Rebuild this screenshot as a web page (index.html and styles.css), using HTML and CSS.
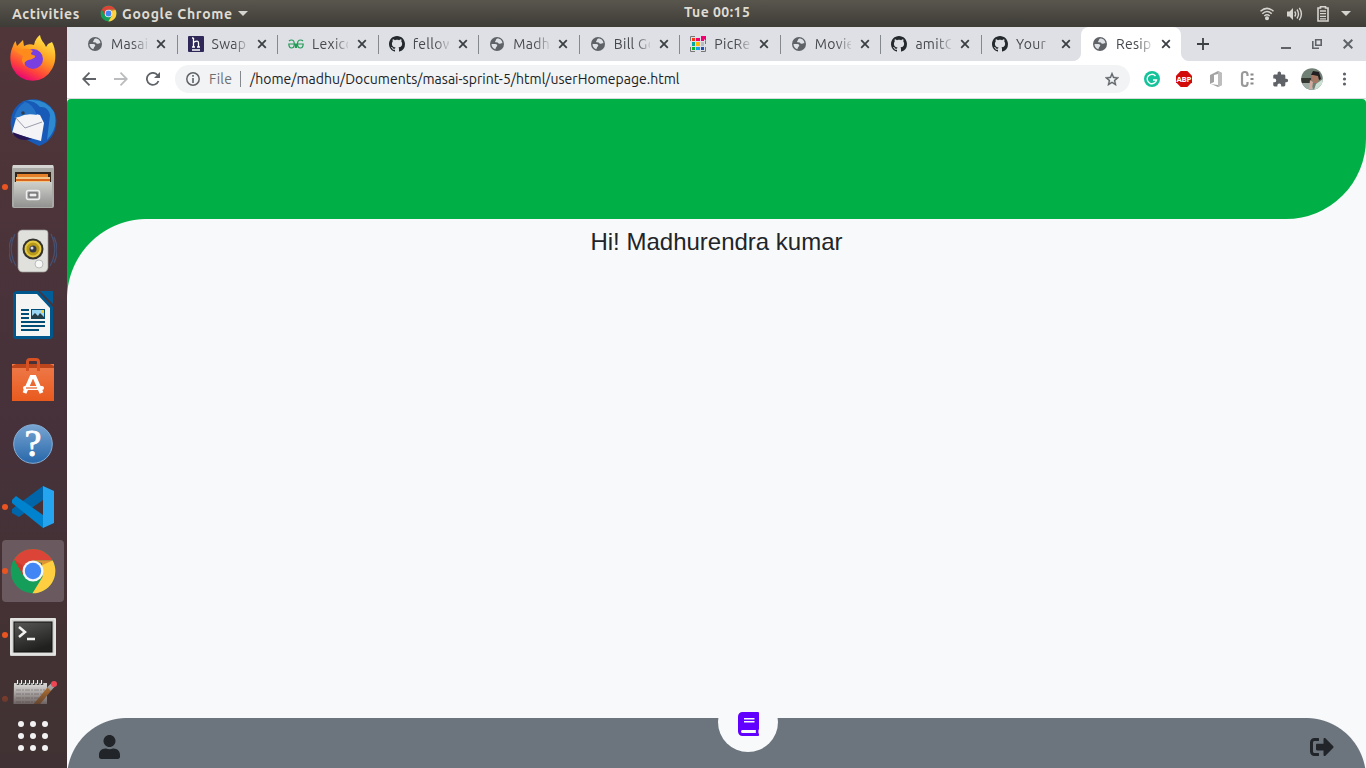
FILE: index.html
```html
<!DOCTYPE html>
<html lang="en">
<head>
<meta charset="utf-8">
<title>Resipe</title>
<link rel="stylesheet" href="styles.css">
</head>
<body>
<svg class="defs" aria-hidden="true">
  <symbol id="globe" viewBox="0 0 14 14"><circle cx="7" cy="7" r="7" fill="#5f6368"/><path d="M7.2 1.5C5.700 2 6.200 3.400 5.200 4.200 4.600 5 5.600 5.700 6.900 5.300 7.700 5 8 6.500 9.500 6.700 10.700 7 10.400 6 12.400 6.300 12.500 3.800 10.400 1.400 7.200 1.500ZM1.500 7H5.300C7 7 7.700 8.400 7 9.200 6 9.600 6.200 10.500 5.300 12.200 3 11.500 1.400 9.400 1.500 7Z" fill="#dee1e6"/></symbol>
  <symbol id="github" viewBox="0 0 16 16"><path fill="#24292e" d="M8 0C3.58 0 0 3.58 0 8c0 3.54 2.29 6.53 5.47 7.59.4.07.55-.17.55-.38 0-.19-.01-.82-.01-1.49-2.01.37-2.53-.49-2.69-.94-.09-.23-.48-.94-.82-1.13-.28-.15-.68-.52-.01-.53.63-.01 1.08.58 1.23.82.72 1.21 1.87.87 2.33.66.07-.52.28-.87.51-1.07-1.78-.2-3.64-.89-3.64-3.95 0-.87.31-1.59.82-2.15-.08-.2-.36-1.02.08-2.12 0 0 .67-.21 2.2.82.64-.18 1.32-.27 2-.27s1.36.09 2 .27c1.53-1.04 2.2-.82 2.2-.82.44 1.1.16 1.92.08 2.12.51.56.82 1.27.82 2.15 0 3.07-1.87 3.75-3.65 3.95.29.25.54.73.54 1.48 0 1.07-.01 1.93-.01 2.2 0 .21.15.46.55.38A8 8 0 0 0 16 8c0-4.42-3.58-8-8-8z"/></symbol>
  <symbol id="close" viewBox="0 0 10 10"><path d="M1.2 1.2 8.8 8.8M8.8 1.2 1.2 8.8" stroke="#3c4043" stroke-width="1.8"/></symbol>
  <symbol id="chrome" viewBox="0 0 48 48"><circle cx="24" cy="24" r="22.3" fill="#149e59"/><path d="M5 12.5A22.3 22.3 0 0 1 43.5 13.5H24L14 28Z" fill="#dc4437"/><path d="M43.7 13.5A22.3 22.3 0 0 1 23.5 46.3L33.5 30 33 16 24 13.5Z" fill="#ffce41"/><path d="M24 13.5H43.7L33.5 18ZM14 28 5 12.5 17 21Z" fill="#a6271b" opacity=".35"/><circle cx="24" cy="24" r="10.5" fill="#f4f7fb"/><circle cx="24" cy="24" r="8.2" fill="#4285f4"/></symbol>
  <linearGradient id="gFire" x1=".8" y1="0" x2=".3" y2="1"><stop offset="0" stop-color="#fff04a"/><stop offset=".45" stop-color="#ff9a20"/><stop offset=".75" stop-color="#ff443b"/><stop offset="1" stop-color="#e7007a"/></linearGradient>
  <linearGradient id="gGrey" x1="0" y1="0" x2="0" y2="1"><stop offset="0" stop-color="#cfcfcc"/><stop offset="1" stop-color="#929290"/></linearGradient>
  <linearGradient id="gHelp" x1="0" y1="0" x2="0" y2="1"><stop offset="0" stop-color="#78a5d2"/><stop offset="1" stop-color="#2767aa"/></linearGradient>
  <linearGradient id="gBag" x1="0" y1="0" x2="0" y2="1"><stop offset="0" stop-color="#ee7b4b"/><stop offset="1" stop-color="#e95a1e"/></linearGradient>
  <linearGradient id="gTerm" x1="0" y1="0" x2=".4" y2="1"><stop offset="0" stop-color="#585856"/><stop offset="1" stop-color="#20201f"/></linearGradient>
</svg>

<header class="topbar">
  <div class="topbar-left"><span class="activities">Activities</span><svg width="17" height="17"><use href="#chrome"/></svg><span class="appname">Google Chrome</span><i class="caret"></i></div>
  <span class="clock">Tue 00:15</span>
  <div class="topbar-right">
    <svg class="wifi" width="14" height="14" viewBox="0 0 14 14" fill="none" stroke="#d6d4cf" stroke-width="1.5"><path d="M.5 4.3Q7-1.6 13.5 4.3M2.3 6.8Q7 2.3 11.7 6.8M4.3 9Q7 6.5 9.7 9"/><circle cx="7" cy="11.3" r="1.3" fill="#d6d4cf"/></svg>
    <svg class="vol" width="16" height="14" viewBox="0 0 16 14"><path d="M0 4.5H2.5L6 1V13L2.500 9.500H0Z" fill="#d6d4cf"/><path d="M7.700 4.500Q9.500 7 7.700 9.500M10 2.500Q13 7 10 11.500M12.300 .8Q16.500 7 12.300 13.200" fill="none" stroke="#d6d4cf" stroke-width="1.400"/></svg>
    <svg class="bat" width="12" height="16" viewBox="0 0 12 16"><path d="M3.500 2V.8H8.500V2H11V15H1V2Z" fill="none" stroke="#d6d4cf" stroke-width="1.600"/><path d="M3 5H9M3 7.700H9M3 10.300H9M3 12.800H9" stroke="#d6d4cf" stroke-width="1.300"/></svg>
    <i class="caret"></i>
  </div>
</header>

<div class="desktop">
  <nav class="dock">
    <div class="app up"><svg width="48" height="48" viewBox="0 0 48 48"><path d="M4 12C5 9 6 8 6.500 7L8 12 14 6 15 12Q20 9 25 11C26 6 28 3 31 1 32 7 35 8 37 13L39 10 43 8C47 15 48 27 43 35A22 22 0 0 1 4 35C0 27 1 18 4 12Z" fill="url(#gFire)"/><circle cx="24" cy="25" r="10" fill="#793fe0"/><path d="M5 15Q8 13 12 16 18 13 24 17 20 20 24 21 28 22 25 24 22 26 19 26 14 28 16 32 11 27 14 22 9 20 5 15Z" fill="#ff8b1d"/></svg></div>
    <div class="app"><svg width="48" height="48" viewBox="0 0 48 48"><path d="M13 3C26-4 44 3 47 18 49 30 43 43 30 47L26 45 12 38 4 35C-1 25 2 9 13 3Z" fill="#185ab7"/><path d="M12 3Q23-1 31 8 39 7 41 16L38 41Q50 28 45 13 37 0 21 1Z" fill="#2d8ad0"/><path d="M8 16Q18 12 31 16L35 24 32 42 3 34Z" fill="#f4f4f6"/><path d="M6 18 16 29 33 23" fill="none" stroke="#9a9dab"/><path d="M5 19Q8 8 16 3 24 5 28 16 17 14 10 18Z" fill="#2674c8"/><circle cx="14" cy="14" r="1.800" fill="#303b4f"/><path d="M3 33 23 40 17 41Q8 42 3 33Z" fill="#281654"/></svg></div>
    <div class="app running"><svg width="48" height="48" viewBox="0 0 48 48"><path d="M3 4Q3 2 5 2H43Q45 2 45 4V43Q45 45 43 45H5Q3 45 3 43Z" fill="#a9a9a6"/><path d="M4 2H44V5H4Z" fill="#d4d4d2"/><path d="M6 9H42V19H6Z" fill="#332519"/><path d="M8 11H39V14H8Z" fill="#e78129"/><path d="M7 14H41V19H7Z" fill="#f0c784"/><path d="M7 16H41V18H7Z" fill="#dc631b"/><path d="M5 19H43V44H5Z" fill="url(#gGrey)"/><rect x="17.500" y="27.500" width="13" height="9" rx="2" fill="#aaa" stroke="#eee" stroke-width="1.500"/><rect x="20" y="30" width="8" height="4" fill="#eee" stroke="#555"/></svg></div>
    <div class="app"><svg width="48" height="48" viewBox="0 0 48 48"><path d="M6 7Q-2 23 7 39M3 10Q-3 23 3 36M42 7Q50 23 41 39M45 10Q51 23 45 36" fill="none" stroke="#465070" stroke-width="1.300"/><path d="M13 3H36Q39 3 39 6V41Q38 45 35 45H13Q10 45 9 41V6Q10 3 13 3Z" fill="#e0e0dd" stroke="#999" stroke-width=".7"/><circle cx="24" cy="22" r="10.500" fill="#34322c"/><circle cx="24" cy="22" r="7.500" fill="#b99a18" stroke="#e4c843" stroke-width="2"/><circle cx="24" cy="22" r="3.500" fill="#353949"/><circle cx="23" cy="21" r="1.500" fill="#ddd"/><circle cx="30" cy="37" r="4" fill="#f7f7f5" stroke="#bbb"/></svg></div>
    <div class="app"><svg width="48" height="48" viewBox="0 0 48 48"><path d="M7 0H29L44 16V46L42 48H6L4 46V2Z" fill="#00578c"/><path d="M7 3H28L41 17V45H7Z" fill="#f5f5f4"/><path d="M31 0H44V13Z" fill="#005d98"/><path d="M12 19H20M12 23H20M12 27H20M12 31H36M12 35H36M12 39H30" stroke="#004d76" stroke-width="2"/><rect x="22.500" y="18.500" width="13" height="9" fill="#9bd5f4" stroke="#004d76"/><path d="M23 27.500 23 25 26 22 29 25 31 22 35 26V27.500Z" fill="#263d43"/><circle cx="33.500" cy="20.500" r="1.500" fill="#fad02e"/></svg></div>
    <div class="app down"><svg width="48" height="48" viewBox="0 0 48 48"><path d="M3 8H45V45H3Z" fill="url(#gBag)"/><path d="M3 12V10L7 8H41L45 10V12Z" fill="#bd451c"/><path d="M18.500 15V6Q18.500 3.500 21 3.500H27Q29.500 3.500 29.500 6V15" fill="none" stroke="#d75122" stroke-width="3"/><path d="M15.500 37 22.500 21H25.500L32.500 37" fill="none" stroke="#fff" stroke-width="4"/><path d="M16 32H33" stroke="#fff" stroke-width="4" stroke-linecap="round"/><path d="M17 32H28" stroke="#e96a35" stroke-width="1.300"/></svg></div>
    <div class="app down"><svg width="48" height="48" viewBox="0 0 48 48"><circle cx="24" cy="24" r="19.300" fill="url(#gHelp)" stroke="#86afd8"/><text class="question" x="24" y="36" text-anchor="middle">?</text></svg></div>
    <div class="app running"><svg width="48" height="48" viewBox="0 0 48 48"><path d="M34 3V17L10 34 3 30V26Z" fill="#0065a9"/><path d="M3 17 7 13 34 32V45L3 20Z" fill="#0083ce"/><path d="M34 3 45 8V40L34 45Z" fill="#25a5f0"/></svg></div>
    <div class="app running active"><svg width="48" height="48"><use href="#chrome"/></svg></div>
    <div class="app running down2"><svg width="48" height="48" viewBox="0 0 48 48"><rect x="1" y="5" width="46" height="38" rx="1" fill="#d2d2d0"/><rect x="2" y="6" width="44" height="35" fill="none" stroke="#f2f2f1"/><rect x="5" y="9" width="38" height="30" fill="url(#gTerm)" stroke="#111"/><path d="M10 14 16 19 10 24M18 26H26" fill="none" stroke="#f1f1ef" stroke-width="2.500"/></svg></div>
    <div class="app running notes"><svg width="48" height="48" viewBox="0 0 48 48"><path d="M5 5H38V44H4Z" fill="#d1d0ce"/><path d="M7 12H36M7 16H36M7 20H30M7 24H32" stroke="#999" stroke-width="1" stroke-dasharray="5 1 2 1"/><path d="M9 2V7M13 2V7M17 2V7M21 2V7M25 2V7M29 2V7M33 2V7" stroke="#444" stroke-width="2.500"/><path d="M8.500 2V6M12.500 2V6M16.500 2V6M20.500 2V6M24.500 2V6M28.500 2V6M32.500 2V6" stroke="#eee"/><path d="M23 32 42 9" stroke="#b8742e" stroke-width="5"/><path d="M40 11 44 7" stroke="#aaa" stroke-width="5"/><circle cx="45" cy="6" r="3" fill="#ef4654"/></svg></div>
    <div class="allapps"><i></i><i></i><i></i><i></i><i></i><i></i><i></i><i></i><i></i></div>
  </nav>

  <main class="browser">
    <div class="tabs">
      <div class="tab"><svg class="favicon"><use href="#globe"/></svg><span>Masai</span><svg class="x"><use href="#close"/></svg></div>
      <div class="tab"><svg class="favicon big" viewBox="0 0 16 16"><rect width="16" height="16" rx="1" fill="#2e2757"/><path d="M5.500 2V11M5.500 6.500Q10.500 3.500 10.500 7V11M4 2H5.500M4 11H7M9 11H12M4 14H12" fill="none" stroke="#fff" stroke-width="1.300"/></svg><span>Swap</span><svg class="x"><use href="#close"/></svg></div>
      <div class="tab"><svg class="favicon big" viewBox="0 0 16 16"><path d="M1 5Q2 4 3.500 4 6.300 4 6.300 8 6.300 12 3.500 12 1 12 .8 8H7.500V12M15 5Q14 4 12.500 4 9.500 4 9.500 8 9.500 12 12.500 12 15 12 15.200 8H8.500V12" fill="none" stroke="#239b56" stroke-width="1.200"/></svg><span>Lexico</span><svg class="x"><use href="#close"/></svg></div>
      <div class="tab"><svg class="favicon big"><use href="#github"/></svg><span>fellow</span><svg class="x"><use href="#close"/></svg></div>
      <div class="tab"><svg class="favicon"><use href="#globe"/></svg><span>Madh</span><svg class="x"><use href="#close"/></svg></div>
      <div class="tab"><svg class="favicon"><use href="#globe"/></svg><span>Bill Go</span><svg class="x"><use href="#close"/></svg></div>
      <div class="tab"><svg class="favicon big" viewBox="0 0 16 16"><path d="M.5 5V.5H5M11 15.500H15.500V11M.5 11V15.500H5M15.500 5V8" fill="none" stroke="#777"/><path d="M2 2H5V5H2Z" fill="#f33b12"/><path d="M6 2H10V5H6ZM11 0H16V5L14 3V5H11Z" fill="#f30070"/><path d="M2 6H5V10H2Z" fill="#05a99d"/><path d="M6 6H10V10H6Z" fill="#ffb900"/><path d="M11 6H14V10H11Z" fill="#bbb"/><path d="M2 11H5V14H2Z" fill="#08b925"/><path d="M6 11H10V14H6Z" fill="#18a1e7"/><path d="M11 11H14V14H11Z" fill="#234eac"/></svg><span>PicRe</span><svg class="x"><use href="#close"/></svg></div>
      <div class="tab"><svg class="favicon"><use href="#globe"/></svg><span>Movie</span><svg class="x"><use href="#close"/></svg></div>
      <div class="tab"><svg class="favicon big"><use href="#github"/></svg><span>amitG</span><svg class="x"><use href="#close"/></svg></div>
      <div class="tab before-current"><svg class="favicon big"><use href="#github"/></svg><span>Your</span><svg class="x"><use href="#close"/></svg></div>
      <div class="tab current"><svg class="favicon"><use href="#globe"/></svg><span>Resip</span><svg class="x"><use href="#close"/></svg></div>
      <svg class="newtab" width="12" height="12" viewBox="0 0 12 12"><path d="M6 0V12M0 6H12" stroke="#3c4043" stroke-width="1.800"/></svg>
      <div class="winbuttons"><svg width="10" height="12" viewBox="0 0 10 12"><path d="M0 10H10" stroke="#5f6368" stroke-width="2"/></svg><svg width="10" height="10" viewBox="0 0 10 10"><path d="M3.700.8H9.200V6.200H3.700ZM.8 2V9.200H7" fill="none" stroke="#5f6368" stroke-width="1.600"/></svg><svg width="10" height="10" viewBox="0 0 10 10"><path d="M.7.7 9.300 9.300M9.300.7.7 9.300" stroke="#5f6368" stroke-width="2"/></svg></div>
    </div>

    <div class="toolbar">
      <div class="navicons">
        <svg viewBox="0 0 14 14"><path d="M14 7H1.500M7.500 .7 1.200 7 7.500 13.300" fill="none" stroke="#5f6368" stroke-width="1.800"/></svg>
        <svg viewBox="0 0 14 14"><path d="M0 7H12.500M6.500 .7 12.800 7 6.500 13.300" fill="none" stroke="#babcbe" stroke-width="1.800"/></svg>
        <svg viewBox="0 0 14 14"><path d="M12.500 9A6 6 0 1 1 11.500 3" fill="none" stroke="#5f6368" stroke-width="1.800"/><path d="M14 0V6H8Z" fill="#5f6368"/></svg>
      </div>
      <div class="omnibox">
        <svg width="14" height="14" viewBox="0 0 14 14"><circle cx="7" cy="7" r="6.200" fill="none" stroke="#5f6368" stroke-width="1.500"/><path d="M7 3V4.800M7 6V11" stroke="#5f6368" stroke-width="1.600"/></svg>
        <span class="file">File</span><span class="url">/home/madhu/Documents/masai-sprint-5/html/userHomepage.html</span>
        <svg class="star" width="14" height="14" viewBox="2 2 20 19"><path fill="#5f6368" stroke="#5f6368" stroke-width=".5" d="M22 9.240l-7.190-.62L12 2 9.190 8.630 2 9.240l5.460 4.730L5.820 21 12 17.270 18.180 21l-1.630-7.030L22 9.240zM12 15.400l-3.760 2.270 1-4.280-3.320-2.880 4.380-.38L12 6.100l1.710 4.040 4.380.38-3.320 2.880 1 4.280L12 15.400z"/></svg>
      </div>
      <div class="extensions">
        <svg viewBox="0 0 22 22"><circle cx="11" cy="11" r="8" fill="#15c39a"/><path d="M14.500 8A4.700 4.700 0 1 0 15.500 12H12M15.500 12 14 14.500" fill="none" stroke="#fff" stroke-width="1.400"/></svg>
        <svg viewBox="0 0 22 22"><path d="M7.700 3H14.300L19 7.700V14.300L14.300 19H7.700L3 14.300V7.700Z" fill="#d20b0b"/><text class="abp" x="11" y="13.800" text-anchor="middle" textLength="15">ABP</text></svg>
        <svg viewBox="0 0 22 22"><path d="M13 3 17 5V17L13 19 6 16 13 17V6L9 7V14L5 16V7Z" fill="#a3a3a3"/><path d="M13 3 17 5V17L13 19Z" fill="#bdbdbd"/></svg>
        <svg viewBox="0 0 22 22"><path d="M10.500 8V6.500Q10.500 4 7.800 4T5 6.500V15.500Q5 18 7.800 18T10.500 15.500V14" fill="none" stroke="#999" stroke-width="2.200"/><path d="M13.500 5.500H16.500V7.500H13.500ZM13.500 10H16.500V12H13.500ZM13.500 14.500H16.500V16.500H13.500Z" fill="#888"/></svg>
        <svg viewBox="-4 -4 31 31"><path fill="#5f6368" d="M20.500 11H19V7c0-1.100-.9-2-2-2h-4V3.500a2.500 2.500 0 0 0-5 0V5H4c-1.100 0-2 .9-2 2v3.800h1.500a2.700 2.700 0 0 1 0 5.400H2V20c0 1.100.9 2 2 2h3.800v-1.500a2.700 2.700 0 0 1 5.400 0V22H17c1.100 0 2-.9 2-2v-4h1.500a2.500 2.500 0 0 0 0-5z"/></svg>
        <svg viewBox="0 0 22 22"><clipPath id="face"><circle cx="11" cy="11" r="10.800"/></clipPath><g clip-path="url(#face)"><path d="M0 0H22V22H0Z" fill="#718074"/><path d="M0 10H10V16H0Z" fill="#343830"/><path d="M0 15H9L13 22H0Z" fill="#a1aca6"/><path d="M10 6 16 5 18 9 17 15 12 15Z" fill="#a67864"/><path d="M10 7 12 3 18 4 20 11 18 12 17 8 12 7Z" fill="#201e20"/><path d="M15 16 22 11V22H13Z" fill="#cce0d5"/><path d="M9 12 12 14 11 21H8Z" fill="#d2aaa0"/></g></svg>
        <svg viewBox="0 0 22 22" fill="#5f6368"><circle cx="11.500" cy="6" r="1.600"/><circle cx="11.500" cy="11" r="1.600"/><circle cx="11.500" cy="16" r="1.600"/></svg>
      </div>
    </div>

    <section class="page">
      <div class="banner"></div>
      <div class="content"><h1>Hi! Madhurendra kumar</h1></div>
      <footer class="footer">
        <svg width="21" height="24" viewBox="0 0 448 512"><path d="M224 256c70.700 0 128-57.300 128-128S294.700 0 224 0 96 57.300 96 128s57.300 128 128 128zm89.600 32h-16.700c-22.200 10.200-46.900 16-72.900 16s-50.600-5.800-72.900-16h-16.700C60.200 288 0 348.200 0 422.400V464c0 26.500 21.500 48 48 48h352c26.500 0 48-21.500 48-48v-41.600c0-74.200-60.200-134.400-134.400-134.400z"/></svg>
        <svg width="24" height="24" viewBox="0 0 512 512"><path d="M497 273L329 441c-15 15-41 4.500-41-17v-96H152c-13.300 0-24-10.700-24-24v-96c0-13.300 10.700-24 24-24h136V88c0-21.400 25.900-32 41-17l168 168c9.300 9.400 9.300 24.600 0 34zM192 436v-40c0-6.600-5.400-12-12-12H96c-17.700 0-32-14.300-32-32V160c0-17.700 14.300-32 32-32h84c6.600 0 12-5.400 12-12V76c0-6.600-5.400-12-12-12H96c-53 0-96 43-96 96v192c0 53 43 96 96 96h84c6.600 0 12-5.400 12-12z"/></svg>
        <div class="bookmark"><svg width="21" height="24" viewBox="0 0 448 512"><path d="M448 360V24c0-13.300-10.700-24-24-24H96C43 0 0 43 0 96v320c0 53 43 96 96 96h328c13.300 0 24-10.700 24-24v-16c0-7.500-3.500-14.300-8.900-18.700-4.200-15.400-4.200-59.300 0-74.700 5.400-4.300 8.900-11.100 8.900-18.600zM128 134c0-3.300 2.700-6 6-6h212c3.300 0 6 2.700 6 6v20c0 3.300-2.700 6-6 6H134c-3.300 0-6-2.700-6-6v-20zm0 64c0-3.300 2.700-6 6-6h212c3.300 0 6 2.700 6 6v20c0 3.300-2.700 6-6 6H134c-3.300 0-6-2.700-6-6v-20zm253.400 250H96c-17.700 0-32-14.300-32-32 0-17.600 14.400-32 32-32h285.400c-1.900 17.100-1.900 46.900 0 64z"/></svg></div>
      </footer>
    </section>
  </main>
</div>
</body>
</html>
```
FILE: styles.css
```css
* { box-sizing: border-box; }
body { margin: 0; width: 1366px; height: 768px; overflow: hidden; font-family: Ubuntu, "Noto Sans", "Open Sans", sans-serif; }
svg { display: block; flex: none; }
.defs { position: absolute; width: 0; height: 0; }

.topbar { height: 27px; display: grid; grid-template-columns: 684px 66px 1fr; align-items: center; background: linear-gradient(#59564e, #3e3c37); color: #dfdbd2; font-size: 14px; font-weight: 600; line-height: 26px; }
.topbar-left { display: flex; align-items: center; padding-left: 12px; }
.activities { width: 88px; white-space: nowrap; letter-spacing: .55px; }
.appname { width: 111px; margin-left: 5px; white-space: nowrap; letter-spacing: .7px; }
.caret { width: 0; height: 0; margin-left: 5px; border: 5px solid transparent; border-top-color: #d6d4cf; border-bottom: 0; }
.clock { white-space: nowrap; font-size: 14px; letter-spacing: .45px; line-height: 25px; padding-bottom: 2px; }
.topbar-right { display: flex; align-items: center; justify-content: flex-end; padding-right: 15px; }
.wifi { margin-right: 13px; }
.vol { margin-right: 14px; }
.bat { margin-right: 7px; }

.desktop { display: flex; height: 741px; }
.dock { width: 67px; flex: none; background: linear-gradient(#503639, #46313a 55%, #433233 85%, #403234); }
.app { position: relative; height: 64px; display: flex; align-items: center; justify-content: center; padding-right: 1px; }
.app.up { padding-bottom: 2px; }
.app.down { padding-top: 2px; }
.app.down2 { padding-top: 3px; }
.app.active::after { content: ""; position: absolute; inset: 1px 3px 1px 2px; border-radius: 4px; background: #6a5a60; }
.app svg { position: relative; z-index: 1; }
.running::before { content: ""; position: absolute; z-index: 2; left: 2px; top: 29px; width: 6px; height: 6px; border-radius: 50%; background: #e95420; }
.question { font: 38px "Liberation Serif", serif; fill: #fff; stroke: #fff; stroke-width: .9px; }
.notes { height: 37px; align-items: flex-start; padding-top: 11px; overflow: hidden; -webkit-mask-image: linear-gradient(#000 50%, rgba(0,0,0,.3)); mask-image: linear-gradient(#000 50%, rgba(0,0,0,.3)); }
.notes::before { top: 29px; opacity: .6; }
.allapps { display: grid; grid-template-columns: repeat(3, 6px); gap: 6px; margin: 17px 0 0 18px; }
.allapps i { height: 6px; border-radius: 50%; background: #f2f2f2; }

.browser { width: 1299px; display: flex; flex-direction: column; background: #fff; }
.tabs { height: 34px; display: flex; align-items: center; padding-left: 9px; background: #dee0e6; color: #45484d; }
.tab { width: 100.55px; height: 34px; flex: none; display: flex; align-items: center; padding-left: 12px; position: relative; }
.tab::after { content: ""; position: absolute; right: -1px; top: 8px; width: 1px; height: 19px; background: #85888d; }
.tab.before-current::after, .tab.current::after { display: none; }
.tab.current { width: 100px; padding-left: 11.5px; background: #fff; border-radius: 8px 8px 0 0; }
.tab.current::before { content: ""; position: absolute; left: -8px; right: -8px; bottom: 0; height: 8px; background: radial-gradient(circle at 0 0, transparent 7.5px, #fff 8.5px) 0 0 / 8px 8px no-repeat, radial-gradient(circle at 8px 0, transparent 7.5px, #fff 8.5px) 100% 0 / 8px 8px no-repeat; }
.favicon { width: 14px; height: 14px; }
.favicon.big { width: 16px; height: 16px; margin: 0 -1px; }
.tab span { width: 36px; margin: 0 9px 0 9px; overflow: hidden; white-space: nowrap; font-size: 14px; line-height: 20px; letter-spacing: .3px; -webkit-mask-image: linear-gradient(90deg, #000 60%, rgba(0,0,0,.15)); mask-image: linear-gradient(90deg, #000 60%, rgba(0,0,0,.15)); }
.x { width: 10px; height: 10px; }
.newtab { margin-left: 16px; }
.winbuttons { display: flex; align-items: center; gap: 21px; margin-left: auto; padding-right: 13px; }

.toolbar { height: 38px; display: flex; align-items: center; padding-bottom: 1px; border-bottom: 1px solid #d8dade; }
.navicons { display: flex; gap: 18px; width: 108px; padding-left: 15px; }
.navicons svg { width: 14px; height: 14px; }
.omnibox { width: 955px; height: 28px; border-radius: 14px; background: #f1f3f4; display: flex; align-items: center; padding: 0 11px; font-size: 14px; line-height: 20px; color: #202124; }
.file { width: 32px; margin: 0 0 0 9px; height: 16px; line-height: 16px; letter-spacing: .3px; color: #6b6e72; border-right: 1px solid #85888d; }
.url { margin-left: 9px; white-space: nowrap; letter-spacing: .02px; }
.star { margin-left: auto; }
.extensions { display: flex; gap: 10px; margin-left: 11px; }
.extensions svg { width: 22px; height: 22px; }
.abp { font: bold 7.8px "Open Sans", sans-serif; fill: #fff; }

.page { height: 669px; display: flex; flex-direction: column; background: #f8f9fa; }
.banner { height: 120px; flex: none; background: #00b046; border-radius: 4px 4px 80px 0; }
.content { flex: 1; background: radial-gradient(circle at 80px 80px, #f8f9fa 79.500px, #00b046 80.500px) 0 0 / 80px 80px no-repeat; padding-top: 8px; }
.content h1 { margin: 0; text-align: center; font: 24px/29px "Liberation Sans", Arial, sans-serif; color: #212529; }
.footer { height: 50px; position: relative; display: flex; justify-content: space-between; padding: 17px 32px 0; background: radial-gradient(circle at 60px 60px, transparent 59.5px, #f8f9fa 60.5px) 0 0 / 60px 50px no-repeat, radial-gradient(circle at 0 60px, transparent 59.5px, #f8f9fa 60.5px) 100% 0 / 60px 50px no-repeat, #6c757d; fill: #212529; }
.bookmark { position: absolute; left: 651px; top: -26px; width: 60px; height: 60px; border-radius: 50%; display: flex; justify-content: center; padding: 20px 0 0 1px; background: #f8f9fa; fill: #6200ff; }
```
